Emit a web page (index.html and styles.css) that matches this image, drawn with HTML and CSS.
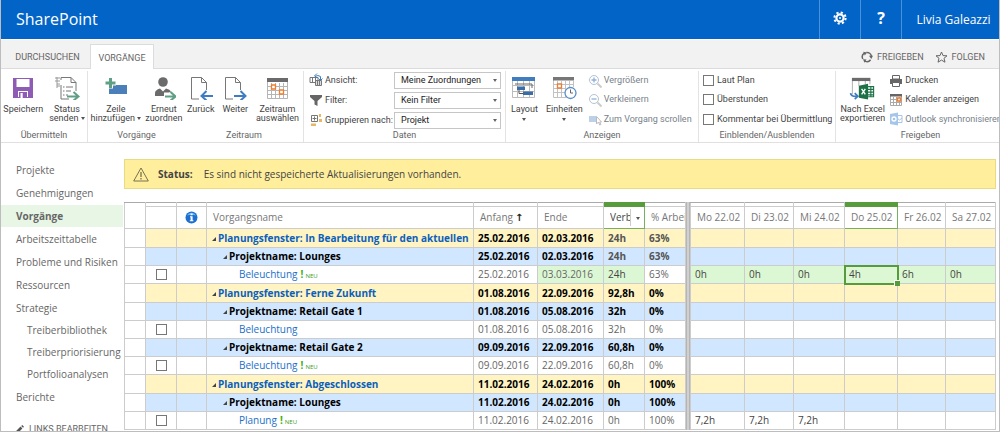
FILE: index.html
```html
<!DOCTYPE html>
<html lang="de">
<head>
<meta charset="utf-8">
<meta name="viewport" content="width=device-width, initial-scale=1">
<title>Vorgänge</title>
<link rel="stylesheet" href="styles.css">
</head>
<body>
<header class="suite">
  <a class="brand" href="#">SharePoint</a>
  <button class="suite-btn" aria-label="Einstellungen">
    <svg width="14" height="14" viewBox="0 0 14 14"><g fill="none" stroke="#fff"><circle cx="7" cy="7" r="3.6" stroke-width="2.2"/><circle cx="7" cy="7" r="5.6" stroke-width="2" stroke-dasharray="2.2 2.2"/></g><circle cx="7" cy="7" r="1" fill="#fff"/></svg>
  </button>
  <button class="suite-btn help" aria-label="Hilfe">?</button>
  <button class="suite-user">Livia Galeazzi</button>
</header>

<div class="tabs">
  <button class="tab">DURCHSUCHEN</button>
  <button class="tab active">VORGÄNGE</button>
  <div class="tab-actions">
    <button class="tab-action"><svg width="12" height="12" viewBox="0 0 12 12" fill="none" stroke="#666" stroke-width="1.5"><path d="M1.800 8A4.500 4.500 0 0 1 3.400 2.200M5.400 1.500a4.500 4.500 0 0 1 5 3.700M9.600 8.800A4.500 4.500 0 0 1 4 10.100"/><path fill="#666" stroke="none" d="M2.200.800 6 1.500 3.800 4.500zM8 4.800h4L10.300 8zM2 8.200l3.500.3-2 3.200z"/></svg>FREIGEBEN</button>
    <button class="tab-action"><svg width="13" height="12" viewBox="0 0 13 12" fill="none" stroke="#666"><path d="M6.500 1 8 4.600l4 .2-3 2.500 1 3.900-3.500-2.100L3 11.200l1-3.900L1 4.800l4-.2z"/></svg>FOLGEN</button>
  </div>
</div>

<section class="ribbon" aria-label="Menüband">
  <div class="group g-send">
    <div class="group-body">
      <button class="big"><svg width="24" height="24" viewBox="0 0 24 24"><path fill="#8e5bb5" d="M2 2h20v20H2z"/><path fill="#fff" d="M5.500 3h13v8h-13zM7 15h10v6H7z"/><path fill="#8e5bb5" d="M8 16h8v6H8z"/><path fill="#fff" d="M9.500 17h2.200v5H9.500z"/></svg>Speichern</button>
      <button class="big"><svg width="28" height="24" viewBox="0 0 28 24" fill="none"><path d="M8 4V1.500h10l5 5V15M8 9v14h8M18 1.500v5h5" stroke="#777"/><path d="M2 2h5M2 5h5M4 8h3M4 10h3M4 1v11" stroke="#999"/><path d="M10 11h1.500M13 11h7M10 15h1.500M13 15h5M10 19h1.500M13 19h2" stroke="#777"/><path d="M14 20.500h11M20.500 16l5 4.500-5 4" stroke="#5f9f84" stroke-width="2"/></svg><span>Status<br>senden <i class="caret"></i></span></button>
    </div>
    <div class="group-label">Übermitteln</div>
  </div>

  <div class="group g-task divided">
    <div class="group-body">
      <button class="big"><svg width="24" height="24" viewBox="0 0 24 24"><path fill="#4a7fba" d="M5 9h18v9H5z"/><path d="M6.500 1.500v11M1 7h11" stroke="#fff" stroke-width="5"/><path d="M6.500 2v10M1.500 7h10" stroke="#5f9f84" stroke-width="3"/></svg><span>Zeile<br>hinzufügen <i class="caret"></i></span></button>
      <button class="big"><svg width="24" height="24" viewBox="0 0 24 24"><circle cx="11" cy="6" r="4.800" fill="#6b6b6b"/><path fill="#6b6b6b" d="M3 20v-3q0-3 5-4.500l3 3 3-3q4 1 5 3l-2 1H12v3.500z"/><path d="M13 20.500h10M18.500 16l5 4.500-5 4" fill="none" stroke="#5f9f84" stroke-width="2"/></svg>Erneut<br>zuordnen</button>
    </div>
    <div class="group-label">Vorgänge</div>
  </div>

  <div class="group g-time">
    <div class="group-body">
      <button class="big"><svg width="24" height="24" viewBox="0 0 24 24" fill="none"><path d="M10 23H2.500V1.500h10l5 5V14M12.500 1.500v5h5" stroke="#777"/><path d="M24 20H12.500M17.500 15l-5 5 5 4.500" stroke="#3f7cc0" stroke-width="2"/></svg>Zurück</button>
      <button class="big"><svg width="24" height="24" viewBox="0 0 24 24" fill="none"><path d="M10 23H2.500V1.500h10l5 5V14M12.500 1.500v5h5" stroke="#777"/><path d="M11 20h11.500M17.500 15l5 5-5 4.500" stroke="#3f7cc0" stroke-width="2"/></svg>Weiter</button>
      <button class="big"><svg width="24" height="24" viewBox="0 0 24 24" fill="none"><path d="M2 2h21v4H2z" fill="#6b6b6b"/><path d="M2.500 6v16.500h20V6M6.500 7v15M10.500 7v15M14.500 7v15M18.500 7v15M3 10.500h19M3 14.500h19M3 18.500h19" stroke="#b5b5b5"/><path d="M6.500 9h4v4h-4zM14.500 14h4v4h-4z" fill="#fff" stroke="#ed7d31" stroke-width="1.300"/></svg>Zeitraum<br>auswählen</button>
    </div>
    <div class="group-label">Zeitraum</div>
  </div>

  <div class="group g-data divided">
    <div class="group-body fields">
      <label for="view"><svg width="14" height="14" viewBox="0 0 14 14" fill="none"><path d="M1 4.500h8v5H1zM3.500 4v6M6.500 4v6" stroke="#777"/><path d="M6.500 7.500h6v5h-6zM8.500 8v4M10.500 8v4" stroke="#777" fill="#ddd"/><path d="M6 3.500q3-2 5.500 0v4M8 .500 5.500 3l2.500 2M9.500 5.500l2 2 2-2" stroke="#3f7cc0"/></svg>Ansicht:</label>
      <span class="pick"><select id="view"><option>Meine Zuordnungen</option></select></span>
      <label for="filter"><svg width="14" height="14" viewBox="0 0 14 14"><path fill="#666" d="M1 2h12v2L8.500 8v5l-3-1.500V8L1 4z"/></svg>Filter:</label>
      <span class="pick"><select id="filter"><option>Kein Filter</option></select></span>
      <label for="grp"><svg width="14" height="14" viewBox="0 0 14 14"><path d="M2.500 2.500h6v6h-6zM5.500 3.500v4M3.500 5.500h4" fill="none" stroke="#777"/><path fill="#e8b765" d="M10 1h2v3h-2zM10 6h3v3h-3zM2 10.500h5V13H2z"/></svg>Gruppieren nach:</label>
      <span class="pick"><select id="grp"><option>Projekt</option></select></span>
    </div>
    <div class="group-label">Daten</div>
  </div>

  <div class="group g-show divided">
    <div class="group-body">
      <button class="big"><svg width="24" height="24" viewBox="0 0 24 24" fill="none"><path d="M.500 4.500h22v17H.500zM5.500 5v16M11.500 5v16M17.500 5v16M1 9.500h21M1 15.500h21" stroke="#bbb"/><path fill="#3f7cc0" d="M0 1h23v4H0z"/><path d="M3 8h17M20 8v4" stroke="#666"/><path fill="#3a6ca8" d="M5 10.500h8V14H5zM11 15.500h10V19H11z"/><path d="M7 14v3.500h4" stroke="#555"/></svg><span>Layout</span><i class="caret"></i></button>
      <button class="big"><svg width="25" height="24" viewBox="0 0 25 24" fill="none"><path d="M1.500 4v17.500h13M5.500 5v16M9.500 5v16M13.500 5v16M17.500 5v6M21.500 5v6M2 8.500h20M2 12.500h12M2 16.500h11" stroke="#c2c2c2"/><path fill="#777" d="M1 1h21v3.500H1z"/><path d="M5.500 8h4v4h-4z" fill="#fff" stroke="#ed7d31" stroke-width="1.300"/><circle cx="18.500" cy="17" r="5.500" fill="#fff" stroke="#5b8fc9" stroke-width="1.300"/><path d="M18.500 13.500V17h2.500" stroke="#666"/></svg><span>Einheiten</span><i class="caret"></i></button>
      <div class="stack muted">
        <button class="small"><svg width="14" height="14" viewBox="0 0 14 14" fill="none"><circle cx="6" cy="6" r="4.500" stroke="#b5c2d0"/><path d="m9.500 9.500 4 4" stroke="#ccc" stroke-width="2"/><path d="M3.500 6h5M6 3.500v5" stroke="#8fb2d8" stroke-width="1.300"/></svg>Vergrößern</button>
        <button class="small"><svg width="14" height="14" viewBox="0 0 14 14" fill="none"><circle cx="6" cy="6" r="4.500" stroke="#b5c2d0"/><path d="m9.500 9.500 4 4" stroke="#ccc" stroke-width="2"/><path d="M3.500 6h5" stroke="#8fb2d8" stroke-width="1.300"/></svg>Verkleinern</button>
        <button class="small"><svg width="14" height="14" viewBox="0 0 14 14"><path fill="#bcd0e8" d="M1 4h7v6H1z"/><path d="M8.500 4.500v7.500l2-2 1.200 3 1.200-.5-1.200-2.500h1.800z" fill="#fff" stroke="#bbb"/></svg>Zum Vorgang scrollen</button>
      </div>
    </div>
    <div class="group-label">Anzeigen</div>
  </div>

  <div class="group g-hide divided">
    <div class="group-body">
      <div class="stack">
        <label class="small"><input type="checkbox">Laut Plan</label>
        <label class="small"><input type="checkbox">Überstunden</label>
        <label class="small"><input type="checkbox">Kommentar bei Übermittlung</label>
      </div>
    </div>
    <div class="group-label">Einblenden/Ausblenden</div>
  </div>

  <div class="group g-share divided">
    <div class="group-body">
      <button class="big"><svg width="28" height="24" viewBox="0 0 28 26" fill="none"><path d="M2.500 5v15M9.500 5v6M16.500 5v4M21.500 5v4" stroke="#aaa"/><path fill="#6b6b6b" d="M2 2h20v3.500H2z"/><path d="M19.500 11.500h6v11h-6M19 14.500h7M19 17.500h7M19 20.500h7M22.500 11v12" stroke="#1e7145" stroke-width="1.200"/><path fill="#1e7145" d="m9.500 10.500 10-2v17l-10-2z"/><path d="m12.500 14 4 6M16.500 14l-4 6" stroke="#fff" stroke-width="1.500"/><path d="M.500 18.500q.5 4 7 3.500M5 18.500 8.500 22 5 25" stroke="#3f7cc0" stroke-width="1.800"/></svg>Nach Excel<br>exportieren</button>
      <div class="stack">
        <button class="small"><svg width="14" height="14" viewBox="0 0 14 14"><path fill="#fff" stroke="#666" d="M3.500 1.500h7V5h-7z"/><path fill="#666" d="M1 5h12v5H1z"/><path fill="#fff" stroke="#666" d="M3.500 8.500h7v4h-7z"/></svg>Drucken</button>
        <button class="small"><svg width="14" height="14" viewBox="0 0 14 14" fill="none"><path d="M1.500 2v10.500h11V2M4.500 4v8M7.500 4v8M10.500 4v8M2 6.500h10M2 9.500h10" stroke="#aaa"/><path fill="#666" d="M1 1h12v2.500H1z"/><path d="M8.500 5h3v3h-3z" fill="#fff" stroke="#ed7d31" stroke-width="1.500"/></svg>Kalender anzeigen</button>
        <button class="small muted"><svg width="14" height="14" viewBox="0 0 14 14"><path d="M8 3.500h5v7H8zM8 6l2.500 2L13 6" fill="#fff" stroke="#a5c6ea"/><path fill="#a5c6ea" d="m1 2 8-1.500v13L1 12z"/><circle cx="5" cy="7" r="2" fill="none" stroke="#fff" stroke-width="1.300"/></svg>Outlook synchronisieren</button>
      </div>
    </div>
    <div class="group-label">Freigeben</div>
  </div>
</section>

<div class="page">
  <nav class="nav" aria-label="Navigation">
    <ul class="nav-list">
      <li><a href="#">Projekte</a></li>
      <li><a href="#">Genehmigungen</a></li>
      <li><a href="#" class="current" aria-current="page">Vorgänge</a></li>
      <li><a href="#">Arbeitszeittabelle</a></li>
      <li><a href="#">Probleme und Risiken</a></li>
      <li><a href="#">Ressourcen</a></li>
      <li><a href="#">Strategie</a>
        <ul class="nav-sub">
          <li><a href="#">Treiberbibliothek</a></li>
          <li><a href="#">Treiberpriorisierung</a></li>
          <li><a href="#">Portfolioanalysen</a></li>
        </ul>
      </li>
      <li><a href="#">Berichte</a></li>
    </ul>
    <button class="edit-links"><svg width="9" height="9" viewBox="0 0 9 9"><path fill="#555" d="m0 9 .8-2.700L5.500 1.600l1.900 1.900L2.700 8.200zM6.200 1 7.200 0 9 1.800 8 2.800z"/></svg>LINKS BEARBEITEN</button>
  </nav>

  <main class="main">
    <div class="status" role="status">
      <svg width="16" height="15" viewBox="0 0 16 15" fill="none" stroke="#77724f"><path d="M8 1 15.300 14H.700z"/><path d="M8 5v5M8 11v1.500" stroke-width="1.300"/></svg>
      <strong>Status:</strong>
      <span>Es sind nicht gespeicherte Aktualisierungen vorhanden.</span>
    </div>

    <div class="grid">
      <table class="sheet tasks">
        <colgroup><col class="c-row"><col class="c-check"><col class="c-info"><col><col class="c-start"><col class="c-end"><col class="c-work"><col class="c-pct"></colgroup>
        <thead>
          <tr class="strip"><td class="open"></td><td></td><td></td><td></td><td></td><td></td><td class="picked"></td><td></td></tr>
          <tr><th></th><th></th><th class="center"><svg width="13" height="13" viewBox="0 0 13 13"><circle cx="6.500" cy="6.500" r="6" fill="#1c6fd0"/><path d="M2 4.500a5 5 0 0 1 9 0q-4.500-1.500-9 0z" fill="#6fb0f2"/><path d="M5.600 2.500h2v1.700h-2zM5 5.300h2.600v3.900h.8v1H4.800v-1h.8V6.300H5z" fill="#fff"/></svg></th><th>Vorgangsname</th><th>Anfang<b class="sort">↑</b></th><th>Ende</th><th class="picked-head"><span class="menu-head"><span class="cut">Verbl</span><button class="drop" aria-label="Spaltenmenü"><i class="caret"></i></button></span></th><th>% Arbeit</th></tr>
        </thead>
        <tbody>
          <tr class="window"><td></td><td></td><td></td><td><i class="tri"></i><a href="#">Planungsfenster: In Bearbeitung für den aktuellen</a></td><td>25.02.2016</td><td>02.03.2016</td><td class="soft">24h</td><td class="soft">63%</td></tr>
          <tr class="project"><td></td><td></td><td></td><td><i class="tri"></i>Projektname: Lounges</td><td>25.02.2016</td><td>02.03.2016</td><td class="soft">24h</td><td class="soft">63%</td></tr>
          <tr class="task"><td></td><td class="center"><input type="checkbox" aria-label="Zeile auswählen"></td><td></td><td><a href="#">Beleuchtung</a><span class="new"><b>!</b>NEU</span></td><td>25.02.2016</td><td class="changed">03.03.2016</td><td class="changed dark">24h</td><td>63%</td></tr>
          <tr class="window"><td></td><td></td><td></td><td><i class="tri"></i><a href="#">Planungsfenster: Ferne Zukunft</a></td><td>01.08.2016</td><td>22.09.2016</td><td>92,8h</td><td>0%</td></tr>
          <tr class="project"><td></td><td></td><td></td><td><i class="tri"></i>Projektname: Retail Gate 1</td><td>01.08.2016</td><td>05.08.2016</td><td>32h</td><td>0%</td></tr>
          <tr class="task"><td></td><td class="center"><input type="checkbox" aria-label="Zeile auswählen"></td><td></td><td><a href="#">Beleuchtung</a></td><td>01.08.2016</td><td>05.08.2016</td><td>32h</td><td>0%</td></tr>
          <tr class="project"><td></td><td></td><td></td><td><i class="tri"></i>Projektname: Retail Gate 2</td><td>09.09.2016</td><td>22.09.2016</td><td>60,8h</td><td>0%</td></tr>
          <tr class="task"><td></td><td class="center"><input type="checkbox" aria-label="Zeile auswählen"></td><td></td><td><a href="#">Beleuchtung</a><span class="new"><b>!</b>NEU</span></td><td>09.09.2016</td><td>22.09.2016</td><td>60,8h</td><td>0%</td></tr>
          <tr class="window"><td></td><td></td><td></td><td><i class="tri"></i><a href="#">Planungsfenster: Abgeschlossen</a></td><td>11.02.2016</td><td>24.02.2016</td><td>0h</td><td>100%</td></tr>
          <tr class="project"><td></td><td></td><td></td><td><i class="tri"></i>Projektname: Lounges</td><td>11.02.2016</td><td>24.02.2016</td><td>0h</td><td>100%</td></tr>
          <tr class="task"><td></td><td class="center"><input type="checkbox" aria-label="Zeile auswählen"></td><td></td><td><a href="#">Planung</a><span class="new"><b>!</b>NEU</span></td><td>11.02.2016</td><td>24.02.2016</td><td>0h</td><td>100%</td></tr>
        </tbody>
      </table>
      <div class="splitter"></div>
      <table class="sheet days">
        <colgroup><col class="d-mo"><col class="d-di"><col class="d-mi"><col class="d-do"><col class="d-fr"><col class="d-sa"></colgroup>
        <thead>
          <tr class="strip"><td></td><td></td><td></td><td class="picked"></td><td></td><td></td></tr>
          <tr><th>Mo 22.02</th><th>Di 23.02</th><th>Mi 24.02</th><th class="picked-head">Do 25.02</th><th>Fr 26.02</th><th>Sa 27.02</th></tr>
        </thead>
        <tbody>
          <tr class="window"><td></td><td></td><td></td><td></td><td></td><td></td></tr>
          <tr class="project"><td></td><td></td><td></td><td></td><td></td><td></td></tr>
          <tr class="task edited"><td>0h</td><td>0h</td><td>0h</td><td class="active-cell">4h</td><td>6h</td><td>0h</td></tr>
          <tr class="window"><td></td><td></td><td></td><td></td><td></td><td></td></tr>
          <tr class="project"><td></td><td></td><td></td><td></td><td></td><td></td></tr>
          <tr class="task"><td></td><td></td><td></td><td></td><td></td><td></td></tr>
          <tr class="project"><td></td><td></td><td></td><td></td><td></td><td></td></tr>
          <tr class="task"><td></td><td></td><td></td><td></td><td></td><td></td></tr>
          <tr class="window"><td></td><td></td><td></td><td></td><td></td><td></td></tr>
          <tr class="project"><td></td><td></td><td></td><td></td><td></td><td></td></tr>
          <tr class="task"><td>7,2h</td><td>7,2h</td><td>7,2h</td><td></td><td></td><td></td></tr>
        </tbody>
      </table>
    </div>
  </main>
</div>
</body>
</html>
```
FILE: styles.css
```css
* { box-sizing: border-box; }

body {
  margin: 0;
  height: 100vh;
  overflow: hidden;
  display: flex;
  flex-direction: column;
  border: 1px solid #bdbdbd;
  border-top: 0;
  background: #fff;
  color: #666;
  font: 10px/18px "Open Sans", "Noto Sans", sans-serif;
}

button, select, input { font: inherit; color: inherit; margin: 0; }
button { padding: 0; border: 0; background: none; white-space: nowrap; }
a { color: inherit; text-decoration: none; }
svg { flex: none; display: block; }

.caret {
  display: inline-block;
  border: 2px solid transparent;
  border-top: 3px solid #555;
  border-bottom: 0;
  vertical-align: middle;
}

/* Suite bar */
.suite {
  flex: none;
  display: flex;
  height: 39px;
  background: #0364c8;
  color: #fff;
}
.brand { flex: 1; padding-left: 15px; font-size: 16px; line-height: 38px; }
.suite-btn {
  display: flex;
  align-items: center;
  justify-content: center;
  width: 41px;
  padding-bottom: 4px;
  border-left: 1px solid #4a90da;
}
.help { font-size: 16px; font-weight: 700; }
.suite-user { width: 98px; padding-left: 6px; border-left: 1px solid #4a90da; font-size: 12px; }

/* Tabs */
.tabs {
  flex: none;
  display: flex;
  align-items: flex-end;
  height: 29px;
  margin-top: 1px;
  border-bottom: 1px solid #dcdcdc;
  background: #f2f2f2;
  font: 9px/12px Roboto, "Open Sans", sans-serif;
}
.tab { width: 89px; height: 24px; padding: 2px 0 0 4px; }
.tab.active {
  width: 64px;
  padding-left: 0;
  margin-bottom: -1px;
  height: 25px;
  border: 1px solid #dcdcdc;
  border-bottom: 0;
  background: #fff;
}
.tab-actions { display: flex; gap: 11px; margin-left: auto; padding: 0 14px 5px 0; }
.tab-action { display: flex; align-items: center; gap: 4px; }

/* Ribbon */
.ribbon {
  flex: none;
  display: flex;
  overflow: hidden;
  padding-top: 2px;
  border-bottom: 1px solid #e0e0e0;
  color: #444;
  font: 9px/9px Roboto, "Open Sans", sans-serif;
}
.group { flex: none; display: flex; flex-direction: column; }
.divided { border-left: 1px solid #e3e3e3; }
.group-body { display: flex; justify-content: center; height: 58px; }
.group-label { padding-bottom: 1px; line-height: 12px; text-align: center; color: #666; }
.g-send { width: 86px; }
.g-task { width: 98px; }
.g-time { width: 118px; }
.g-data { width: 202px; }
.g-show { width: 193px; }
.g-hide { width: 137px; }
.g-share { width: 170px; }

.big {
  display: flex;
  flex-direction: column;
  align-items: center;
  padding: 5px 3px 0;
  line-height: 9px;
}
.big svg { margin-bottom: 5px; }
.big > .caret { margin-top: 4px; }
.g-task .big, .g-time .big { padding: 5px 2px 0; }
.g-time .group-body { justify-content: space-between; padding-right: 2px; }
.g-show .big { padding: 5px 4px 0; }
.g-show .group-body, .g-share .group-body { padding-left: 1px; }

.fields {
  display: grid;
  grid-template-columns: 85px 107px;
  grid-auto-rows: 20px;
  justify-content: start;
  padding-left: 5px;
}
.fields label { display: flex; align-items: center; gap: 2px; height: 18px; white-space: nowrap; }
.pick { position: relative; display: block; padding: 1px 0 2px; }
.pick select {
  display: block;
  appearance: none;
  width: 100%;
  height: 17px;
  padding: 0 6px;
  border: 1px solid #c6c6c6;
  border-radius: 0;
  background: #fff;
  color: #222;
}
.pick::after {
  content: "";
  position: absolute;
  right: 4px;
  top: 8px;
  border: 2px solid transparent;
  border-top: 3px solid #666;
  border-bottom: 0;
  pointer-events: none;
}

.stack { display: flex; flex-direction: column; flex: 1; padding-left: 4px; }
.small { display: flex; align-items: center; gap: 3px; height: 20px; white-space: nowrap; }
.g-show .stack, .g-share .stack { padding-left: 1px; }
.g-show .small, .g-share .small { gap: 2px; }
.muted { color: #777f8a; }

input[type="checkbox"] {
  appearance: none;
  display: block;
  width: 11px;
  height: 11px;
  border: 1px solid #777;
  background: #fff;
}

/* Page */
.page { flex: 1; display: flex; min-height: 0; }

.nav { flex: none; width: 122px; padding-top: 16px; overflow: hidden; }
.nav ul { margin: 0; padding: 0; list-style: none; }
.nav a { display: block; padding-left: 15px; line-height: 22px; white-space: nowrap; }
.nav-list { display: flex; flex-direction: column; gap: 1px; }
.nav .nav-sub a { padding-left: 26px; }
.nav a.current { background: #e8f6e6; font-weight: 700; }
.edit-links {
  display: flex;
  align-items: center;
  gap: 5px;
  margin-top: 12px;
  padding-left: 14px;
  font: 9px/18px Roboto, "Open Sans", sans-serif;
}

.main { flex: 1; min-width: 0; padding: 16px 3px 0 1px; }

.status {
  display: flex;
  align-items: center;
  gap: 9px;
  height: 30px;
  margin-bottom: 13px;
  padding-left: 8px;
  border: 1px solid #e6dc88;
  background: #ffee9c;
  color: #444;
}
.status span { padding-left: 2px; }

/* Timesheet */
.grid { display: flex; }
.splitter { flex: none; width: 4px; border: 1px solid #b5b5b5; border-width: 0 1px; background: #d0d0d0; }

.sheet { table-layout: fixed; border-collapse: collapse; }
.tasks { flex: 1; width: 100%; }
.days { flex: none; width: 306px; }
.sheet th, .sheet td {
  height: 18px;
  padding: 0 0 0 4px;
  border: 1px solid #ccc;
  line-height: 17px;
  text-align: left;
  white-space: nowrap;
  overflow: hidden;
}
.sheet .window td { height: 19px; }
.sheet th { height: 22px; padding-left: 6px; font-weight: 400; color: #777; }
.sheet .strip td { height: 4px; padding: 0; border-top-color: #aaa; }
.sheet .strip .open { border-bottom-color: transparent; }
.sheet .strip .picked { background: #579b3c; border-color: #579b3c; }
.sheet .picked-head { border: 1px solid #78b05f; }
.sheet .center { padding: 0; text-align: center; }
.center input, .center svg { margin: 0 auto; }

.c-row { width: 21px; }
.c-check { width: 31px; }
.c-info { width: 30px; }
.c-start { width: 64px; }
.c-end { width: 66px; }
.c-work { width: 41px; }
.c-pct { width: 41px; }
.d-mo { width: 54px; }
.d-di { width: 49px; }
.d-mi { width: 51px; }
.d-do { width: 53px; }
.d-fr { width: 48px; }

.sort { padding-left: 2px; color: #222; font-family: "DejaVu Sans", sans-serif; line-height: 1; }
.menu-head { display: flex; }
.cut { flex: 1; overflow: hidden; color: #444; }
.drop { width: 14px; border-left: 1px solid #ccc; }

.window td { background: #fff4c2; font-weight: 700; color: #000; }
.project td { background: #d1e7ff; font-weight: 700; color: #000; }
.tasks tbody td:first-child { background: #fff; }
.tasks .window a { color: #0b60bd; }
.task a { color: #1a6fc9; }
.sheet .soft { color: #555; }
.sheet .changed, .edited td { background: #dcf7d4; }
.dark, .days .task { color: #444; }
.tasks .project td:nth-child(4) { padding-left: 15px; }
.tasks .task td:nth-child(4) { padding-left: 32px; }

.tri {
  display: inline-block;
  margin: 0 2px 1px 1px;
  border: 2px solid #444;
  border-top-color: transparent;
  border-left-color: transparent;
}
.new { padding-left: 3px; color: #3c9a1c; font-size: 6px; line-height: 1; }
.new b { padding-right: 2px; color: #3fae12; font-size: 10px; }

.sheet .active-cell { position: relative; outline: 2px solid #579b3c; outline-offset: -1px; overflow: visible; }
.active-cell::after {
  content: "";
  position: absolute;
  right: -3px;
  bottom: -3px;
  width: 5px;
  height: 5px;
  border: 1px solid #fff;
  border-width: 1px 0 0 1px;
  background: #579b3c;
}
```
